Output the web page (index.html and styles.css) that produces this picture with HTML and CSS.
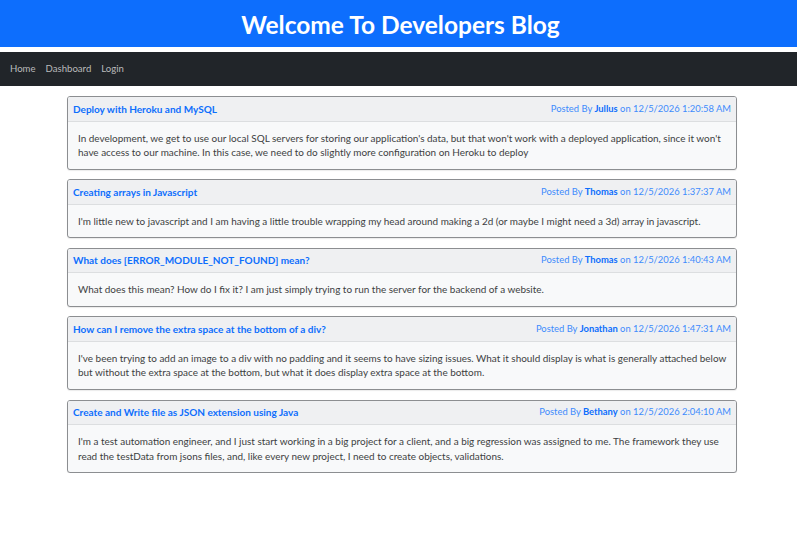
FILE: index.html
```html
<!DOCTYPE html>
<html lang="en">
<head>
<meta charset="utf-8">
<title>Developers Blog</title>
<link rel="stylesheet" href="styles.css">
</head>
<body>
<header class="site-header">
  <h1 class="site-title">Welcome To Developers Blog</h1>
</header>
<nav class="navbar">
  <a class="nav-link" href="#">Home</a>
  <a class="nav-link" href="#">Dashboard</a>
  <a class="nav-link" href="#">Login</a>
</nav>
<main class="posts">
  <article class="card">
    <div class="card-header">
      <a class="post-title" href="#">Deploy with Heroku and MySQL</a>
      <span class="post-meta">Posted By <b>Jullus</b> on 12/5/2026 1:20:58 AM</span>
    </div>
    <div class="card-body">In development, we get to use our local SQL servers for storing our application's data, but that won't work with a deployed application, since it won't have access to our machine. In this case, we need to do slightly more configuration on Heroku to deploy</div>
  </article>
  <article class="card">
    <div class="card-header">
      <a class="post-title" href="#">Creating arrays in Javascript</a>
      <span class="post-meta">Posted By <b>Thomas</b> on 12/5/2026 1:37:37 AM</span>
    </div>
    <div class="card-body">I'm little new to javascript and I am having a little trouble wrapping my head around making a 2d (or maybe I might need a 3d) array in javascript.</div>
  </article>
  <article class="card">
    <div class="card-header">
      <a class="post-title" href="#">What does [ERROR_MODULE_NOT_FOUND] mean?</a>
      <span class="post-meta">Posted By <b>Thomas</b> on 12/5/2026 1:40:43 AM</span>
    </div>
    <div class="card-body">What does this mean? How do I fix it? I am just simply trying to run the server for the backend of a website.</div>
  </article>
  <article class="card">
    <div class="card-header">
      <a class="post-title" href="#">How can I remove the extra space at the bottom of a div?</a>
      <span class="post-meta">Posted By <b>Jonathan</b> on 12/5/2026 1:47:31 AM</span>
    </div>
    <div class="card-body">I've been trying to add an image to a div with no padding and it seems to have sizing issues. What it should display is what is generally attached below but without the extra space at the bottom, but what it does display extra space at the bottom.</div>
  </article>
  <article class="card">
    <div class="card-header">
      <a class="post-title" href="#">Create and Write file as JSON extension using Java</a>
      <span class="post-meta">Posted By <b>Bethany</b> on 12/5/2026 2:04:10 AM</span>
    </div>
    <div class="card-body">I'm a test automation engineer, and I just start working in a big project for a client, and a big regression was assigned to me. The framework they use read the testData from jsons files, and, like every new project, I need to create objects, validations.</div>
  </article>
</main>
</body>
</html>
```
FILE: styles.css
```css
* { box-sizing: border-box; }
html, body {
  margin: 0;
  padding: 0;
  background: #fff;
  font-family: Lato, "Noto Sans", sans-serif;
  font-size: 9.6px;
  line-height: 14.4px;
  color: #3d3f42;
}
.site-header {
  background: #0d6efd;
  height: 47px;
  display: flex;
  align-items: center;
  justify-content: center;
  margin-bottom: 5px;
  padding-top: 3px;
}
.site-title {
  margin: 0;
  color: #fff;
  font-size: 24.5px;
  font-weight: 700;
  line-height: 1.2;
  padding-left: 4px;
}
.navbar {
  background: #212529;
  height: 34px;
  display: flex;
  align-items: center;
  padding-left: 10px;
  gap: 10px;
}
.nav-link {
  color: #b9babb;
  text-decoration: none;
  font-size: 9.6px;
}
.posts {
  width: 670px;
  margin: 10px 0 0 67px;
  display: flex;
  flex-direction: column;
  gap: 9.6px;
}
.card {
  border: 1px solid #8c8e91;
  border-radius: 3px;
  background: #f8f9fa;
  overflow: hidden;
  box-shadow: 0 1px 1px rgba(0,0,0,0.08);
}
.card-header {
  display: flex;
  justify-content: space-between;
  align-items: center;
  height: 24.5px;
  padding: 0 5px;
  background: #eff0f2;
  border-bottom: 1px solid #dcdee0;
  color: #3d8bfd;
}
.post-title {
  color: #0d6efd;
  font-weight: 700;
  font-size: 10px;
  text-decoration: none;
}
.post-meta {
  color: #3d8bfd;
  font-size: 9.4px;
}
.post-meta b {
  color: #0d6efd;
  font-weight: 700;
}
.card-body {
  padding: 9.1px 3px 9.1px 10px;
  font-size: 9.95px;
}
```
